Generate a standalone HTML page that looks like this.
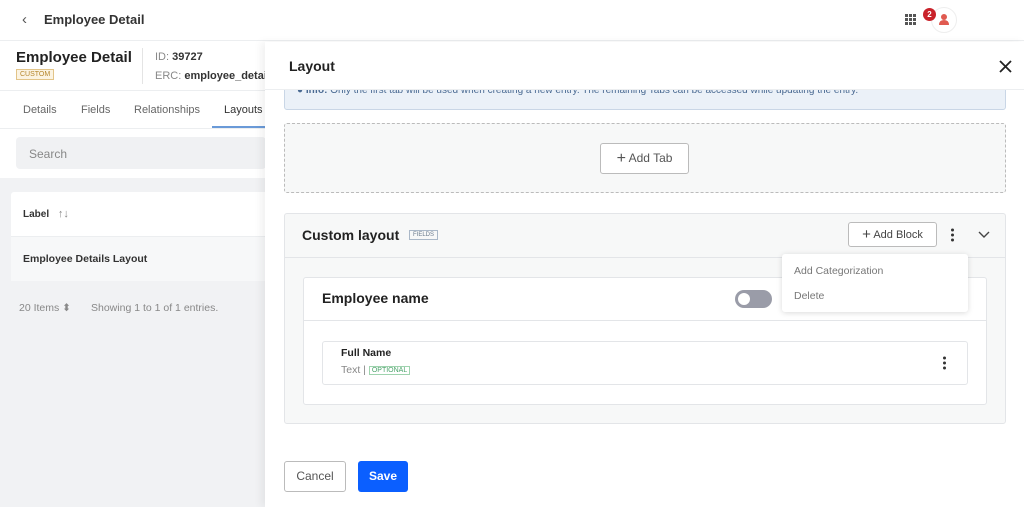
<!DOCTYPE html><html><head><style>
*{box-sizing:border-box;margin:0;padding:0}
body{width:1024px;height:507px;overflow:hidden;font-family:"Liberation Sans",sans-serif;background:#fff;position:relative;color:#272833}
.a{position:absolute}
</style></head><body>
<div class="a" style="left:0;top:0;width:1024px;height:41px;border-bottom:1px solid #eceef0;background:#fff"></div>
<div class="a" style="left:22px;top:11px;font-size:15px;color:#555">&#8249;</div>
<div class="a" style="left:44px;top:12px;font-size:13px;font-weight:bold;color:#333">Employee Detail</div>
<svg class="a" style="left:905px;top:14px" width="11" height="11"><g fill="#555"><rect x="0" y="0" width="3" height="3"/><rect x="4" y="0" width="3" height="3"/><rect x="8" y="0" width="3" height="3"/><rect x="0" y="4" width="3" height="3"/><rect x="4" y="4" width="3" height="3"/><rect x="8" y="4" width="3" height="3"/><rect x="0" y="8" width="3" height="3"/><rect x="4" y="8" width="3" height="3"/><rect x="8" y="8" width="3" height="3"/></g></svg>
<div class="a" style="left:931px;top:7px;width:26px;height:26px;border-radius:50%;border:1px solid #eee;background:#fff"></div>
<svg class="a" style="left:938px;top:13px" width="12" height="13"><circle cx="6" cy="4" r="3" fill="#e05a50"/><path d="M1 12 Q1 7 6 7 Q11 7 11 12Z" fill="#e05a50"/></svg>
<div class="a" style="left:923px;top:8px;width:13px;height:13px;border-radius:50%;background:#c9222a;color:#fff;font-size:8px;font-weight:bold;text-align:center;line-height:13px">2</div>
<div class="a" style="left:16px;top:49px;font-size:15px;font-weight:bold;color:#222">Employee Detail</div>
<div class="a" style="left:16px;top:69px;font-size:7px;color:#b5862c;border:1px solid #e2c488;background:#fbf3e2;padding:1px 3px">CUSTOM</div>
<div class="a" style="left:142px;top:48px;width:1px;height:36px;background:#e4e4e4"></div>
<div class="a" style="left:155px;top:51px;font-size:11px;color:#888">ID: <b style="color:#333">39727</b></div>
<div class="a" style="left:155px;top:70px;font-size:11px;color:#888;white-space:nowrap">ERC: <b style="color:#333">employee_details</b></div>
<div class="a" style="left:0;top:90px;width:265px;height:1px;background:#eceef0"></div>
<div class="a" style="left:23px;top:104px;font-size:11px;color:#666">Details</div>
<div class="a" style="left:81px;top:104px;font-size:11px;color:#666">Fields</div>
<div class="a" style="left:134px;top:104px;font-size:11px;color:#666">Relationships</div>
<div class="a" style="left:224px;top:104px;font-size:11px;color:#333">Layouts</div>
<div class="a" style="left:212px;top:126px;width:53px;height:2px;background:#6a9ad8"></div>
<div class="a" style="left:0;top:128px;width:265px;height:1px;background:#eceef0"></div>
<div class="a" style="left:16px;top:137px;width:250px;height:32px;background:#f0f1f3;border-radius:4px"></div>
<div class="a" style="left:29px;top:147px;font-size:12px;color:#888">Search</div>
<div class="a" style="left:0;top:178px;width:265px;height:329px;background:#f1f2f4"></div>
<div class="a" style="left:11px;top:192px;width:254px;height:89px;background:#fff;border-radius:3px 0 0 3px"></div>
<div class="a" style="left:11px;top:236px;width:254px;height:45px;background:#f7f8f9;border-top:1px solid #eceef0"></div>
<div class="a" style="left:23px;top:208px;font-size:10px;font-weight:bold;color:#333">Label <span style="font-weight:normal;color:#888;margin-left:6px;font-size:11px">↑↓</span></div>
<div class="a" style="left:23px;top:253px;font-size:10.5px;font-weight:bold;color:#333">Employee Details Layout</div>
<div class="a" style="left:19px;top:302px;font-size:10.5px;color:#888">20 Items ⬍</div>
<div class="a" style="left:91px;top:302px;font-size:10.5px;color:#888">Showing 1 to 1 of 1 entries.</div>
<div class="a" style="left:265px;top:42px;width:759px;height:465px;background:#fff;box-shadow:-4px 0 8px rgba(0,0,0,.06)"></div>
<div class="a" style="left:284px;top:78px;width:722px;height:32px;background:#ebf1f8;border:1px solid #c9d6e6;border-radius:3px;overflow:hidden"><div style="margin-top:6px;margin-left:12px;font-size:10px;color:#4a6a92;white-space:nowrap">● <b>Info:</b> Only the first tab will be used when creating a new entry. The remaining Tabs can be accessed while updating the entry.</div></div>
<div class="a" style="left:265px;top:42px;width:759px;height:48px;background:#fff;border-bottom:1px solid #eceef0"></div>
<div class="a" style="left:289px;top:58px;font-size:14px;font-weight:bold;color:#222">Layout</div>
<svg class="a" style="left:999px;top:60px" width="13" height="13"><path d="M1 1 L12 12 M12 1 L1 12" stroke="#222" stroke-width="1.8"/></svg>
<div class="a" style="left:284px;top:123px;width:722px;height:70px;border:1px dashed #bbb;background:#f7f8f8;border-radius:3px"></div>
<div class="a" style="left:600px;top:143px;width:89px;height:31px;border:1px solid #bbb;background:#fff;border-radius:3px;font-size:12px;color:#555;text-align:center;line-height:29px"><span style="font-size:16px;vertical-align:-1px">+</span> Add Tab</div>
<div class="a" style="left:284px;top:213px;width:722px;height:211px;border:1px solid #e3e5e8;background:#f7f8f8;border-radius:3px"></div>
<div class="a" style="left:284px;top:257px;width:722px;height:1px;background:#e3e5e8"></div>
<div class="a" style="left:302px;top:227px;font-size:14px;font-weight:bold;color:#222">Custom layout</div>
<div class="a" style="left:409px;top:230px;font-size:6px;color:#6a7a8c;border:1px solid #aab8c8;padding:1px 3px">FIELDS</div>
<div class="a" style="left:848px;top:222px;width:89px;height:25px;border:1px solid #bbb;background:#fff;border-radius:3px;font-size:11px;color:#444;text-align:center;line-height:23px"><span style="font-size:15px;vertical-align:-1px">+</span> Add Block</div>
<svg class="a" style="left:950px;top:228px" width="5" height="14"><circle cx="2.5" cy="2" r="1.5" fill="#333"/><circle cx="2.5" cy="7" r="1.5" fill="#333"/><circle cx="2.5" cy="12" r="1.5" fill="#333"/></svg>
<svg class="a" style="left:978px;top:231px" width="12" height="8"><path d="M1 1 L6 6 L11 1" stroke="#444" stroke-width="1.4" fill="none"/></svg>
<div class="a" style="left:303px;top:277px;width:684px;height:128px;border:1px solid #e3e5e8;background:#fff;border-radius:3px"></div>
<div class="a" style="left:303px;top:320px;width:684px;height:1px;background:#e3e5e8"></div>
<div class="a" style="left:322px;top:290px;font-size:14px;font-weight:bold;color:#222">Employee name</div>
<div class="a" style="left:735px;top:290px;width:37px;height:18px;border-radius:9px;background:#9a9ca8"></div>
<div class="a" style="left:738px;top:293px;width:12px;height:12px;border-radius:50%;background:#fff"></div>
<div class="a" style="left:322px;top:341px;width:646px;height:44px;border:1px solid #e3e5e8;border-radius:3px;background:#fff"></div>
<div class="a" style="left:341px;top:347px;font-size:10.5px;font-weight:bold;color:#222">Full Name</div>
<div class="a" style="left:341px;top:364px;font-size:10.5px;color:#888">Text | <span style="font-size:7px;color:#4aa36a;border:1px solid #9fd3ae;padding:0 2px;vertical-align:1px">OPTIONAL</span></div>
<svg class="a" style="left:942px;top:356px" width="5" height="14"><circle cx="2.5" cy="2" r="1.5" fill="#333"/><circle cx="2.5" cy="7" r="1.5" fill="#333"/><circle cx="2.5" cy="12" r="1.5" fill="#333"/></svg>
<div class="a" style="left:782px;top:254px;width:186px;height:58px;background:#fff;border-radius:3px;box-shadow:0 1px 6px rgba(0,0,0,.15)"></div>
<div class="a" style="left:794px;top:265px;font-size:10.5px;color:#777">Add Categorization</div>
<div class="a" style="left:794px;top:290px;font-size:10.5px;color:#777">Delete</div>
<div class="a" style="left:284px;top:461px;width:62px;height:31px;border:1px solid #bbb;border-radius:3px;font-size:12px;color:#555;text-align:center;line-height:29px">Cancel</div>
<div class="a" style="left:358px;top:461px;width:50px;height:31px;background:#0b5fff;border-radius:3px;font-size:12px;font-weight:bold;color:#fff;text-align:center;line-height:31px">Save</div>
</body></html>
